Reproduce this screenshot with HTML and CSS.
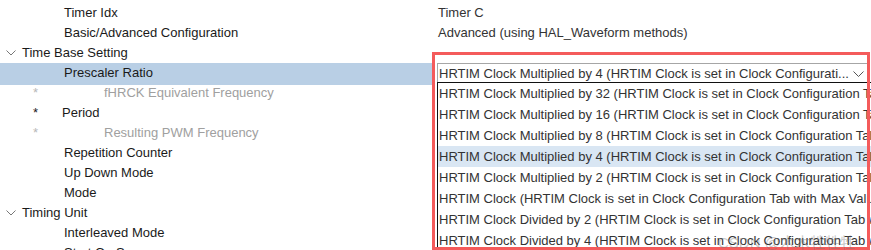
FILE: index.html
```html
<!DOCTYPE html>
<html lang="en">

<head>
    <meta charset="UTF-8">
    <title>HRTIM Configuration</title>
    <link rel="stylesheet" href="styles.css">
</head>

<body>
    <div class="panel">
        <div class="row">
            <div class="name">Timer Idx</div>
            <div class="value">Timer C</div>
        </div>
        <div class="row">
            <div class="name">Basic/Advanced Configuration</div>
            <div class="value">Advanced (using HAL_Waveform methods)</div>
        </div>
        <div class="row">
            <div class="name group">
                <svg class="caret" width="10" height="6" viewBox="0 0 10 6"><polyline points="0.5,0.5 5,5 9.5,0.5" fill="none" stroke="#777" stroke-width="1"/></svg>
                Time Base Setting
            </div>
            <div class="value"></div>
        </div>
        <!-- 当前选中的参数 -->
        <div class="row">
            <div class="name selected">Prescaler Ratio</div>
            <div class="value">
                <div class="select">
                    <span class="select-text">HRTIM Clock Multiplied by 4 (HRTIM Clock is set in Clock Configurati...</span>
                    <svg class="arrow" width="11" height="6" viewBox="0 0 11 6"><polyline points="0.5,0.5 5.5,5.5 10.5,0.5" fill="none" stroke="#555" stroke-width="1"/></svg>
                    <!-- 下拉列表 -->
                    <ul class="options">
                        <li>HRTIM Clock Multiplied by 32 (HRTIM Clock is set in Clock Configuration Tab with Max Value)</li>
                        <li>HRTIM Clock Multiplied by 16 (HRTIM Clock is set in Clock Configuration Tab with Max Value)</li>
                        <li>HRTIM Clock Multiplied by 8 (HRTIM Clock is set in Clock Configuration Tab with Max Value)</li>
                        <li class="hover">HRTIM Clock Multiplied by 4 (HRTIM Clock is set in Clock Configuration Tab with Max Value)</li>
                        <li>HRTIM Clock Multiplied by 2 (HRTIM Clock is set in Clock Configuration Tab with Max Value)</li>
                        <li>HRTIM Clock (HRTIM Clock is set in Clock Configuration Tab with Max Value)</li>
                        <li>HRTIM Clock Divided by 2 (HRTIM Clock is set in Clock Configuration Tab with Max Value)</li>
                        <li>HRTIM Clock Divided by 4 (HRTIM Clock is set in Clock Configuration Tab with Max Value)</li>
                    </ul>
                </div>
            </div>
        </div>
        <div class="row">
            <div class="name param muted"><span class="star wide">*</span>fHRCK Equivalent Frequency</div>
            <div class="value"></div>
        </div>
        <div class="row">
            <div class="name param"><span class="star">*</span>Period</div>
            <div class="value"></div>
        </div>
        <div class="row">
            <div class="name param muted"><span class="star wide">*</span>Resulting PWM Frequency</div>
            <div class="value"></div>
        </div>
        <div class="row">
            <div class="name">Repetition Counter</div>
            <div class="value"></div>
        </div>
        <div class="row">
            <div class="name">Up Down Mode</div>
            <div class="value"></div>
        </div>
        <div class="row">
            <div class="name">Mode</div>
            <div class="value"></div>
        </div>
        <div class="row">
            <div class="name group">
                <svg class="caret" width="10" height="6" viewBox="0 0 10 6"><polyline points="0.5,0.5 5,5 9.5,0.5" fill="none" stroke="#777" stroke-width="1"/></svg>
                Timing Unit
            </div>
            <div class="value"></div>
        </div>
        <div class="row">
            <div class="name">Interleaved Mode</div>
            <div class="value"></div>
        </div>
        <div class="row">
            <div class="name">Start On Sync</div>
            <div class="value"></div>
        </div>

        <!-- 红框标注 -->
        <div class="mark"></div>
        <div class="watermark">CSDN @木木牲牲牲</div>
    </div>
</body>

</html>
```

FILE: styles.css
```css
* {
    margin: 0;
    padding: 0;
}

ul {
    list-style: none;
}

body {
    background-color: #fff;
    font-family: "Liberation Sans", Arial, sans-serif;
    font-size: 13px;
    color: #1a1a1a;
    overflow: hidden;
}

.panel {
    position: relative;
    width: 871px;
    height: 250px;
    padding-top: 3px;
    overflow: hidden;
}

.row {
    display: grid;
    grid-template-columns: 432px 1fr;
    height: 20px;
    line-height: 20px;
}

.name {
    padding-left: 64px;
    white-space: nowrap;
}

.name.selected {
    background-color: #b9cfe5;
}

.name.group {
    display: flex;
    align-items: center;
    padding-left: 6px;
}

.caret {
    margin-right: 6px;
}

.name.param {
    display: flex;
    padding-left: 33px;
}

.star {
    width: 29px;
}

.star.wide {
    width: 71px;
}

.muted {
    color: #a0a0a0;
}

.muted .star {
    color: #b8b8b8;
}

.value {
    padding-left: 6px;
    color: #333;
    white-space: nowrap;
}

.select {
    position: relative;
    height: 20px;
    margin-left: -1px;
    margin-right: 2px;
    border: 1px solid #a6a6a6;
    background-color: #fff;
    display: flex;
    align-items: center;
    line-height: 18px;
    color: #333;
}

.select-text {
    flex: 1;
    padding-left: 1px;
}

.arrow {
    margin-right: 4px;
}

.options {
    position: absolute;
    top: 18px;
    left: -1px;
    width: 460px;
    border: 1px solid #111;
    border-right: none;
    background-color: #fff;
    line-height: 21px;
    z-index: 1;
}

.options li {
    height: 21px;
    padding-left: 1px;
    color: #333;
    white-space: nowrap;
    overflow: hidden;
}

.options li.hover {
    background-color: #d9e6f3;
}

.mark {
    position: absolute;
    left: 432px;
    top: 52px;
    width: 432px;
    height: 192px;
    border: 3px solid #f45b5b;
    z-index: 2;
}

.watermark {
    position: absolute;
    left: 718px;
    top: 231px;
    font-family: "Liberation Sans", "Noto Sans CJK SC", sans-serif;
    font-size: 15px;
    color: rgba(120, 120, 120, 0.4);
    z-index: 3;
}
```
